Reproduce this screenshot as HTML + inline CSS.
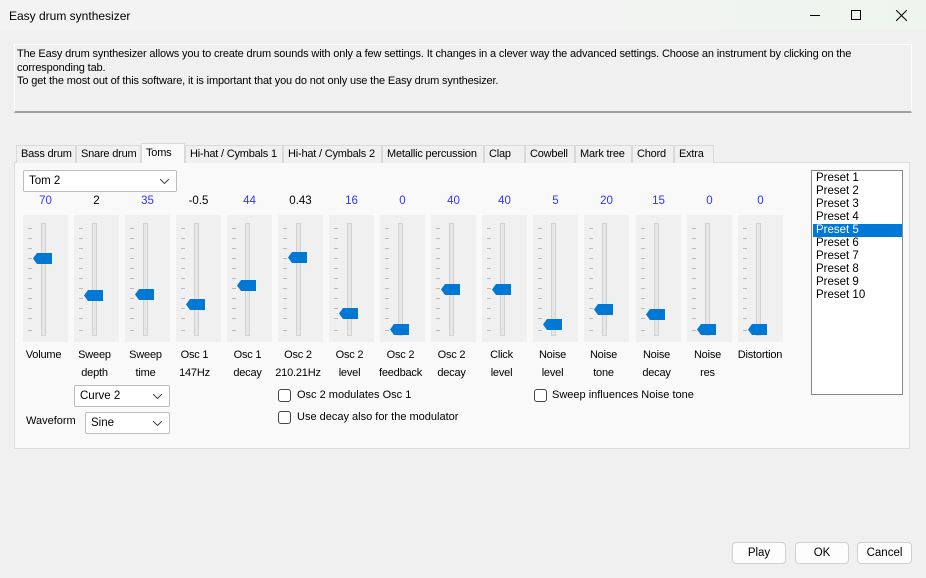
<!DOCTYPE html>
<html><head><meta charset="utf-8"><style>
*{box-sizing:border-box}
body{margin:0;width:926px;height:578px;overflow:hidden;background:#f0f0f0;font-family:"Liberation Sans",sans-serif;font-size:11.5px;color:#000;position:relative}
.a{position:absolute;white-space:nowrap}
.title{left:0;top:0;width:926px;height:30px;background:linear-gradient(90deg,#f3f3f3 60%,#eef5ee);}
.desc{left:14px;top:44px;width:898px;height:69px;background:#f0f0f0;border:1px solid #fff;border-bottom:2px solid #a0a0a0;padding:3px 2px;font-size:11px;line-height:13.5px;white-space:normal;letter-spacing:-0.15px}
.tab{top:145px;height:18px;border:1px solid #d9d9d9;border-bottom:none;background:#f0f0f0;font-size:11px;padding:2px 0 0 4px;letter-spacing:-0.2px;overflow:hidden}
.panel{left:14px;top:162px;width:896px;height:287px;background:#f9f9f9;border:1px solid #dcdcdc}
.v{top:195px;width:45px;text-align:center;font-size:11.5px}
.b{color:#3333ff}
.l{top:346px;width:51px;text-align:center;font-size:11px;line-height:18px;letter-spacing:-0.2px}
.cb{height:22px;background:#fff;border:1px solid #bdbdbd;border-radius:2px;padding:4px 5px;font-size:11.5px}
.cb svg{position:absolute;right:7px;top:8px}
.chk{width:13px;height:13px;border:1px solid #444;border-radius:3px;background:#fff}
.btn{top:542px;height:22px;background:#fdfdfd;border:1px solid #d0d0d0;border-radius:4px;text-align:center;padding-top:4px;font-size:11.5px}
</style></head><body>
<div class="a title"></div>
<div class="a" style="left:9px;top:9px;font-size:12px">Easy drum synthesizer</div>
<div class="a" style="left:810px;top:15px;width:10px;height:1px;background:#000"></div>
<div class="a" style="left:851px;top:10px;width:10px;height:10px;border:1px solid #000"></div>
<svg class="a" style="left:896px;top:10px" width="11" height="11"><path d="M0 0L11 11M11 0L0 11" stroke="#000" stroke-width="1"/></svg>
<div class="a desc">The Easy drum synthesizer allows you to create drum sounds with only a few settings. It changes in a clever way the advanced settings. Choose an instrument by clicking on the corresponding tab.<br>To get the most out of this software, it is important that you do not only use the Easy drum synthesizer.</div>

<div class="a panel"></div>
<div class="a tab" style="left:16px;width:60px">Bass drum</div>
<div class="a tab" style="left:76px;width:65px">Snare drum</div>
<div class="a tab" style="left:141px;width:44px;top:143px;height:20px;background:#f9f9f9;padding-top:3px">Toms</div>
<div class="a tab" style="left:185px;width:98px">Hi-hat / Cymbals 1</div>
<div class="a tab" style="left:283px;width:99px">Hi-hat / Cymbals 2</div>
<div class="a tab" style="left:382px;width:102px">Metallic percussion</div>
<div class="a tab" style="left:484px;width:41px">Clap</div>
<div class="a tab" style="left:525px;width:50px">Cowbell</div>
<div class="a tab" style="left:575px;width:57px">Mark tree</div>
<div class="a tab" style="left:632px;width:42px">Chord</div>
<div class="a tab" style="left:674px;width:40px">Extra</div>

<div class="a cb" style="left:23px;top:170px;width:154px">Tom 2<svg width="9" height="5"><path d="M0 0L4.5 4.5L9 0" stroke="#444" fill="none"/></svg></div>

<svg class="a" style="left:0;top:0" width="926" height="578">
<defs>
<g id="tks" fill="#bbb">
<rect x="5" y="13" width="4" height="1"/><rect x="5" y="23" width="4" height="1"/><rect x="5" y="33" width="4" height="1"/><rect x="5" y="43" width="4" height="1"/><rect x="5" y="53" width="4" height="1"/><rect x="5" y="63" width="4" height="1"/><rect x="5" y="73" width="4" height="1"/><rect x="5" y="83" width="4" height="1"/><rect x="5" y="93" width="4" height="1"/><rect x="5" y="103" width="4" height="1"/><rect x="5" y="115" width="4" height="1"/>
</g>
<g id="sl"><rect width="45" height="127" fill="#f0f0f0"/><rect x="18.5" y="8.5" width="4" height="112" fill="#e6e6e6" stroke="#d2d2d2"/><use href="#tks"/></g>
<path id="th" d="M0 5.5L4 0H19V11H4Z" fill="#0078d4"/>
</defs>
<g transform="translate(23,215)"><use href="#sl"/><use href="#th" x="10" y="38"/></g>
<g transform="translate(74,215)"><use href="#sl"/><use href="#th" x="10" y="75"/></g>
<g transform="translate(125,215)"><use href="#sl"/><use href="#th" x="10" y="74"/></g>
<g transform="translate(176,215)"><use href="#sl"/><use href="#th" x="10" y="84"/></g>
<g transform="translate(227,215)"><use href="#sl"/><use href="#th" x="10" y="65"/></g>
<g transform="translate(278,215)"><use href="#sl"/><use href="#th" x="10" y="37"/></g>
<g transform="translate(329,215)"><use href="#sl"/><use href="#th" x="10" y="93"/></g>
<g transform="translate(380,215)"><use href="#sl"/><use href="#th" x="10" y="109"/></g>
<g transform="translate(431,215)"><use href="#sl"/><use href="#th" x="10" y="69"/></g>
<g transform="translate(482,215)"><use href="#sl"/><use href="#th" x="10" y="69"/></g>
<g transform="translate(533,215)"><use href="#sl"/><use href="#th" x="10" y="104"/></g>
<g transform="translate(584,215)"><use href="#sl"/><use href="#th" x="10" y="89"/></g>
<g transform="translate(636,215)"><use href="#sl"/><use href="#th" x="10" y="94"/></g>
<g transform="translate(687,215)"><use href="#sl"/><use href="#th" x="10" y="109"/></g>
<g transform="translate(738,215)"><use href="#sl"/><use href="#th" x="10" y="109"/></g>
</svg>

<div class="a v b" style="left:23px">70</div>
<div class="a v" style="left:74px">2</div>
<div class="a v b" style="left:125px">35</div>
<div class="a v" style="left:176px">-0.5</div>
<div class="a v b" style="left:227px">44</div>
<div class="a v" style="left:278px">0.43</div>
<div class="a v b" style="left:329px">16</div>
<div class="a v b" style="left:380px">0</div>
<div class="a v b" style="left:431px">40</div>
<div class="a v b" style="left:482px">40</div>
<div class="a v b" style="left:533px">5</div>
<div class="a v b" style="left:584px">20</div>
<div class="a v b" style="left:636px">15</div>
<div class="a v b" style="left:687px">0</div>
<div class="a v b" style="left:738px">0</div>

<div class="a l" style="left:18px">Volume</div>
<div class="a l" style="left:69px">Sweep<br>depth</div>
<div class="a l" style="left:120px">Sweep<br>time</div>
<div class="a l" style="left:169px">Osc 1<br>147Hz</div>
<div class="a l" style="left:222px">Osc 1<br>decay</div>
<div class="a l" style="left:270px;width:56px">Osc 2<br>210.21Hz</div>
<div class="a l" style="left:324px">Osc 2<br>level</div>
<div class="a l" style="left:375px">Osc 2<br>feedback</div>
<div class="a l" style="left:426px">Osc 2<br>decay</div>
<div class="a l" style="left:476px">Click<br>level</div>
<div class="a l" style="left:527px">Noise<br>level</div>
<div class="a l" style="left:578px">Noise<br>tone</div>
<div class="a l" style="left:631px">Noise<br>decay</div>
<div class="a l" style="left:682px">Noise<br>res</div>
<div class="a l" style="left:733px;width:54px">Distortion</div>

<div class="a cb" style="left:74px;top:385px;width:96px">Curve 2<svg width="9" height="5"><path d="M0 0L4.5 4.5L9 0" stroke="#444" fill="none"/></svg></div>
<div class="a" style="left:26px;top:415px;font-size:11px">Waveform</div>
<div class="a cb" style="left:85px;top:412px;width:85px">Sine<svg width="9" height="5"><path d="M0 0L4.5 4.5L9 0" stroke="#444" fill="none"/></svg></div>

<div class="a chk" style="left:278px;top:389px"></div>
<div class="a" style="left:297px;top:389px;font-size:11px">Osc 2 modulates Osc 1</div>
<div class="a chk" style="left:278px;top:411px"></div>
<div class="a" style="left:297px;top:411px;font-size:11px">Use decay also for the modulator</div>
<div class="a chk" style="left:534px;top:389px"></div>
<div class="a" style="left:552px;top:389px;font-size:11px">Sweep influences Noise tone</div>

<div class="a" style="left:811px;top:170px;width:92px;height:225px;background:#fff;border:1px solid #828790;padding:1px 0 0 1px;font-size:11.5px;line-height:13px">
<div style="padding-left:3px">Preset 1</div><div style="padding-left:3px">Preset 2</div><div style="padding-left:3px">Preset 3</div><div style="padding-left:3px">Preset 4</div>
<div style="padding-left:3px;background:#0078d7;color:#fff;width:89px">Preset 5</div>
<div style="padding-left:3px">Preset 6</div><div style="padding-left:3px">Preset 7</div><div style="padding-left:3px">Preset 8</div><div style="padding-left:3px">Preset 9</div><div style="padding-left:3px">Preset 10</div>
</div>

<div class="a btn" style="left:732px;width:54px">Play</div>
<div class="a btn" style="left:795px;width:54px">OK</div>
<div class="a btn" style="left:857px;width:55px">Cancel</div>
</body></html>
